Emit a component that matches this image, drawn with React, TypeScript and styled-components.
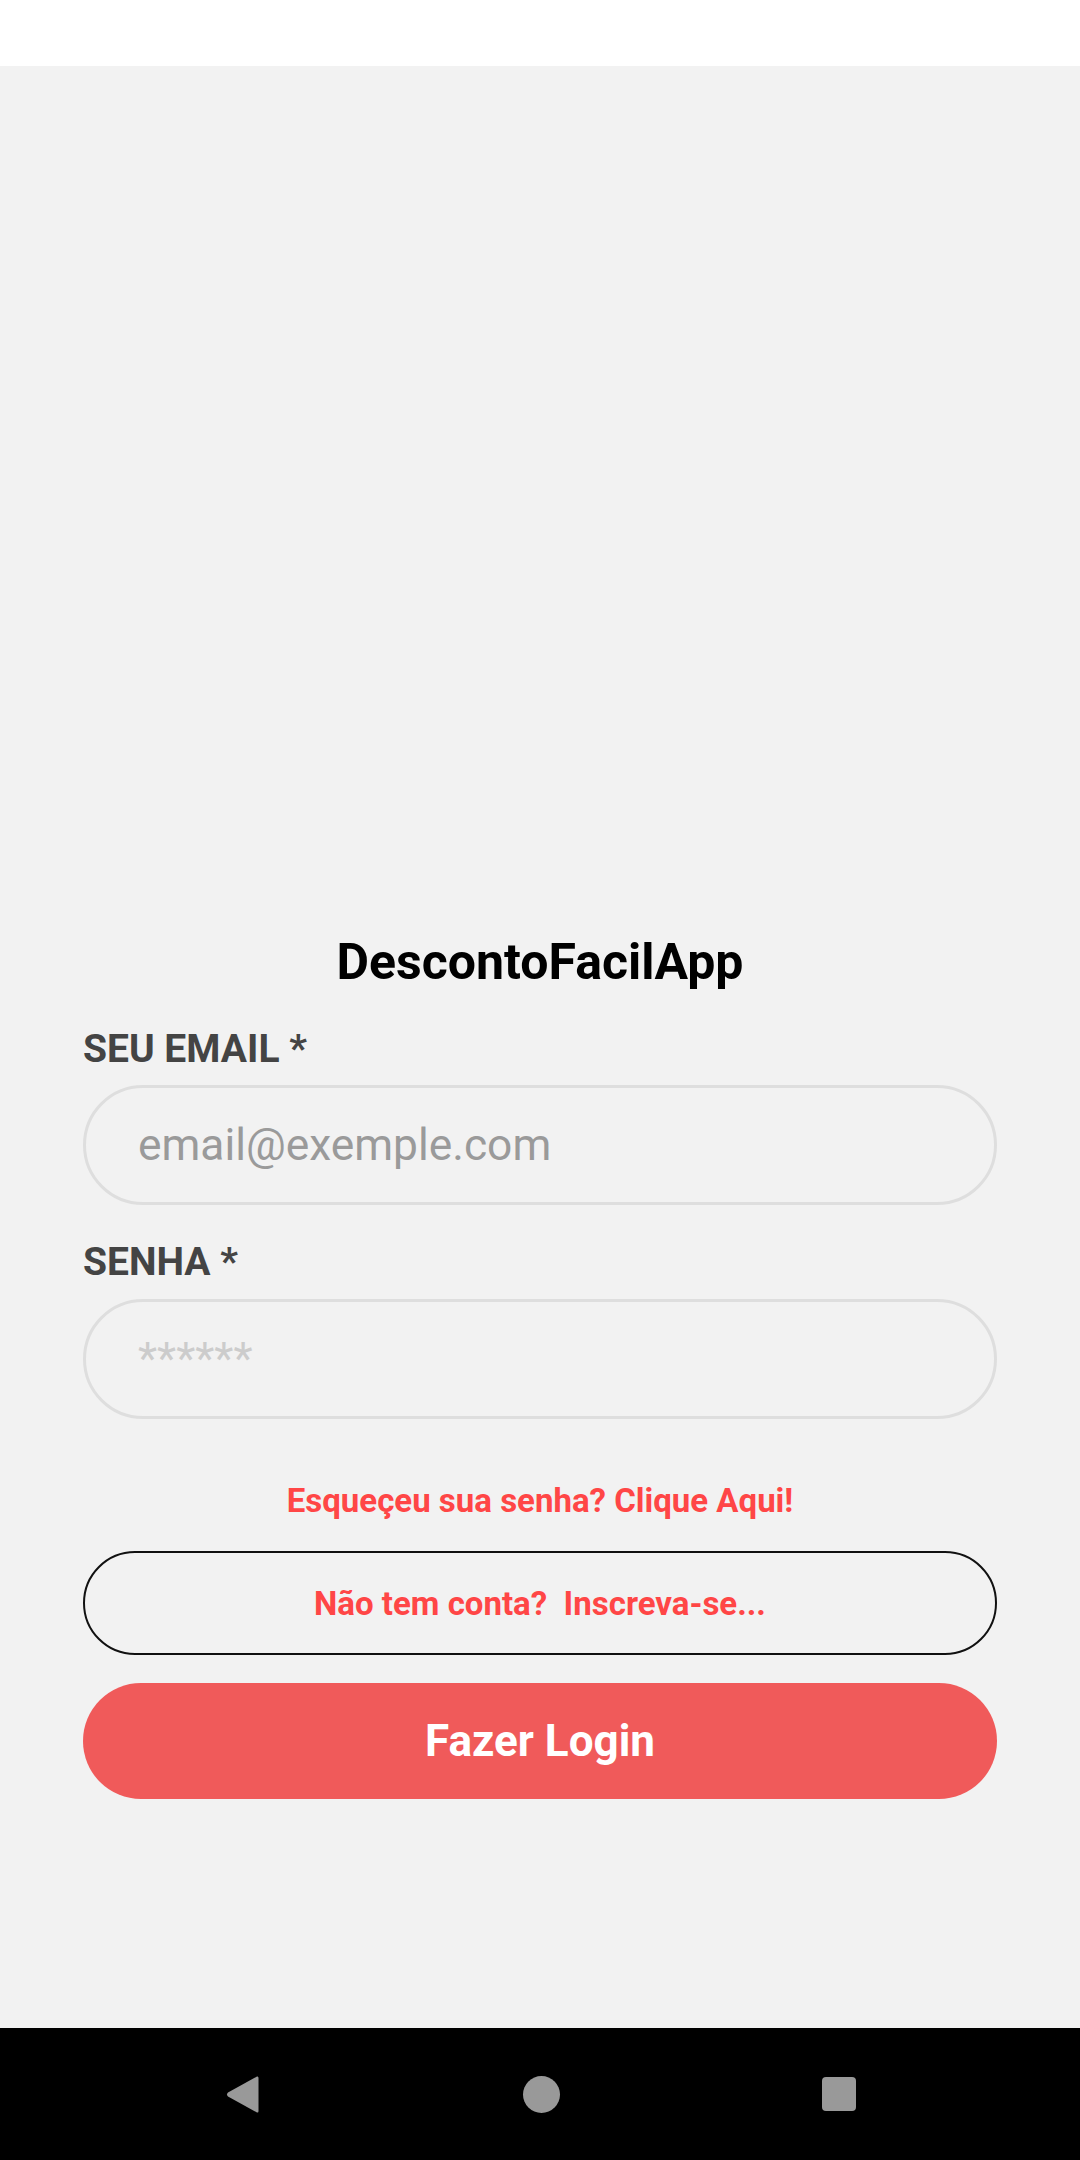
import React from "react";
import styled, { createGlobalStyle } from "styled-components";

const Global = createGlobalStyle`
  html, body { margin: 0; padding: 0; background: #000; }
  body { font-family: Roboto, "Noto Sans", Arial, sans-serif; }
  * { box-sizing: border-box; }
`;

const Screen = styled.div`
  width: 1080px;
  height: 2160px;
  display: flex;
  flex-direction: column;
  overflow: hidden;
`;

const StatusBar = styled.div`
  height: 66px;
  background: #ffffff;
  flex: none;
`;

const Main = styled.main`
  flex: 1;
  background: #f2f2f2;
  display: flex;
  flex-direction: column;
  padding: 866px 83px 0 83px;
`;

const Title = styled.h1`
  margin: 0;
  font-size: 50px;
  line-height: 60px;
  font-weight: 700;
  color: #000;
  text-align: center;
`;

const Label = styled.label<{ $top: number }>`
  display: block;
  margin-top: ${(p) => p.$top}px;
  font-size: 39px;
  line-height: 45px;
  font-weight: 700;
  color: #444;
`;

const Field = styled.input<{ $ph: string; $top: number }>`
  display: block;
  width: 100%;
  height: 120px;
  margin-top: ${(p) => p.$top}px;
  padding: 0 0 0 52px;
  border: 3px solid #dedede;
  border-radius: 60px;
  background: transparent;
  font-family: Roboto, "Noto Sans", Arial, sans-serif;
  font-size: 44.3px;
  color: #333;
  outline: none;
  &::placeholder {
    color: ${(p) => p.$ph};
    opacity: 1;
  }
`;

const Forgot = styled.div`
  margin-top: 62px;
  font-size: 33px;
  line-height: 40px;
  font-weight: 700;
  color: #ff4646;
  text-align: center;
`;

const OutlineButton = styled.button`
  margin-top: 30px;
  width: 100%;
  height: 104px;
  border: 2px solid #111;
  border-radius: 52px;
  background: transparent;
  font-family: Roboto, "Noto Sans", Arial, sans-serif;
  font-size: 33px;
  font-weight: 700;
  color: #ff4646;
  white-space: pre;
  padding: 0;
`;

const LoginButton = styled.button`
  margin-top: 28px;
  width: 100%;
  height: 116px;
  border: none;
  border-radius: 58px;
  background: #f05a5a;
  font-family: Roboto, "Noto Sans", Arial, sans-serif;
  font-size: 44px;
  font-weight: 700;
  color: #fff;
  padding: 0;
`;

const NavRow = styled.nav`
  height: 132px;
  flex: none;
  background: #000;
  display: flex;
  align-items: center;
  padding-left: 226px;
`;

const HomeDot = styled.div`
  width: 37px;
  height: 37px;
  border-radius: 50%;
  background: #999;
  margin-left: 264px;
`;

const RecentSquare = styled.div`
  width: 34px;
  height: 34px;
  border-radius: 4px;
  background: #999;
  margin-left: 262px;
`;

export default function App() {
  return (
    <Screen>
      <Global />
      <StatusBar />
      <Main>
        <Title>DescontoFacilApp</Title>
        <Label $top={35}>SEU EMAIL *</Label>
        <Field $top={13} $ph="#9a9a9a" type="text" placeholder="email@exemple.com" />
        <Label $top={35}>SENHA *</Label>
        <Field $top={14} $ph="#cccccc" type="text" placeholder="******" />
        <Forgot>Esqueçeu sua senha? Clique Aqui!</Forgot>
        <OutlineButton>{"Não tem conta?  Inscreva-se..."}</OutlineButton>
        <LoginButton>Fazer Login</LoginButton>
      </Main>
      <NavRow>
        <svg width="33" height="39" viewBox="0 0 33 39">
          <path d="M31 1.5 Q32.5 1 32.5 3 L32.5 36 Q32.5 38 31 37.5 L2 21.5 Q0 19.5 2 17.5 Z" fill="#999" />
        </svg>
        <HomeDot />
        <RecentSquare />
      </NavRow>
    </Screen>
  );
}
